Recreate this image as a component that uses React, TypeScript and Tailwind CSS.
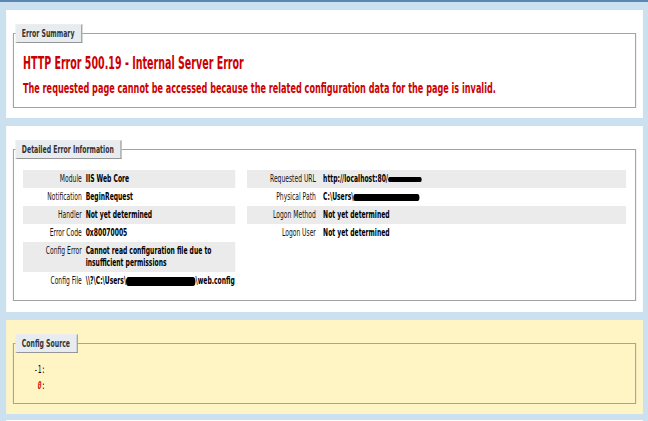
import type { ReactNode } from "react";

// IIS detailed error page. The screenshot is squeezed horizontally, so the page is
// laid out at its natural width and narrowed with one scale-x on the wrapper.

type Row = [string, ReactNode];

const Blot = ({ w, h }: { w: string; h: string }) => (
  <span className={`inline-block ${w} ${h} rounded-full bg-black align-middle`} />
);

const LEFT: Row[] = [
  ["Module", "IIS Web Core"],
  ["Notification", "BeginRequest"],
  ["Handler", "Not yet determined"],
  ["Error Code", "0x80070005"],
  [
    "Config Error",
    <>
      Cannot read configuration file due to
      <br />
      insufficient permissions
    </>,
  ],
  [
    "Config File",
    <>
      {"\\\\?\\C:\\Users\\"}
      <Blot w="w-[124px]" h="h-[9px]" />
      {"\\web.config"}
    </>,
  ],
];

const RIGHT: Row[] = [
  [
    "Requested URL",
    <>
      http://localhost:80/
      <Blot w="w-[60px]" h="h-[5px]" />
    </>,
  ],
  [
    "Physical Path",
    <>
      {"C:\\Users\\"}
      <Blot w="w-[118px]" h="h-[7px]" />
    </>,
  ],
  ["Logon Method", "Not yet determined"],
  ["Logon User", "Not yet determined"],
];

function Panel({ children, yellow }: { children: ReactNode; yellow?: boolean }) {
  return (
    <div className={`mt-2 px-[12px] pt-[14px] pb-[10px] ${yellow ? "bg-[#fff5c4]" : "bg-white"}`}>
      {children}
    </div>
  );
}

function Box({ title, children }: { title: string; children: ReactNode }) {
  return (
    <fieldset className="border-y border-x-2 border-[#a3a3a3] px-[16px] pb-[10px]">
      <legend className="-ml-[13px] h-[19px] border-y border-x-2 border-t-[#ededed] border-l-[#ededed] border-r-[#969696] border-b-[#969696] bg-[#e7ecf0] pl-[9px] pr-[12px] pt-[3px] text-[11px] leading-[11px] font-bold text-[#333]">
        {title}
      </legend>
      {children}
    </fieldset>
  );
}

function Table({ rows, th }: { rows: Row[]; th: string }) {
  return (
    <div className="flex flex-col">
      {rows.map(([k, v], i) => (
        <div key={k} className={`flex py-[3px] text-[10.75px] leading-[12px] ${i % 2 === 0 ? "bg-[#ebebeb]" : ""}`}>
          <div className={`${th} shrink-0 text-right text-[#111]`}>{k}</div>
          <div className="font-bold text-black whitespace-nowrap">{v}</div>
        </div>
      ))}
    </div>
  );
}

export default function App() {
  return (
    <div className="h-screen w-full overflow-hidden bg-[#cbe1ef] font-['DejaVu_Sans',sans-serif]">
      <div className="h-[2px] bg-[#5c87b2]" />
      <div className="w-[1157px] origin-top-left scale-x-[0.56] pl-[11px] pr-[9px]">
        <Panel>
          <Box title="Error Summary">
            <h3 className="mt-[10px] text-[17px] leading-[20px] font-bold text-[#cc0000]">
              HTTP Error 500.19 - Internal Server Error
            </h3>
            <h4 className="mt-[6px] text-[14.5px] leading-[18px] font-bold text-[#cc0000]">
              The requested page cannot be accessed because the related configuration data for the page is invalid.
            </h4>
          </Box>
        </Panel>

        <Panel>
          <div className="pb-px">
            <Box title="Detailed Error Information">
              <div className="mt-[11px] flex gap-[21px]">
                <div className="w-[379px] shrink-0">
                  <Table rows={LEFT} th="w-[112px] pr-[7px]" />
                </div>
                <div className="flex-1">
                  <Table rows={RIGHT} th="w-[136px] pr-[13px]" />
                </div>
              </div>
            </Box>
          </div>
        </Panel>

        <Panel yellow>
          <Box title="Config Source">
            <div className="mt-[9px] whitespace-pre font-['DejaVu_Sans_Mono',monospace] text-[11px] leading-[15.5px] text-black">
              <div>{"   -1:"}</div>
              <div className="flex">
                <span>{"    "}</span>
                <span className="font-bold italic text-[#cc0000]">0</span>
                <span>:</span>
              </div>
            </div>
          </Box>
        </Panel>

        <div className="mt-[6px] h-[2px] bg-white" />
      </div>
    </div>
  );
}
